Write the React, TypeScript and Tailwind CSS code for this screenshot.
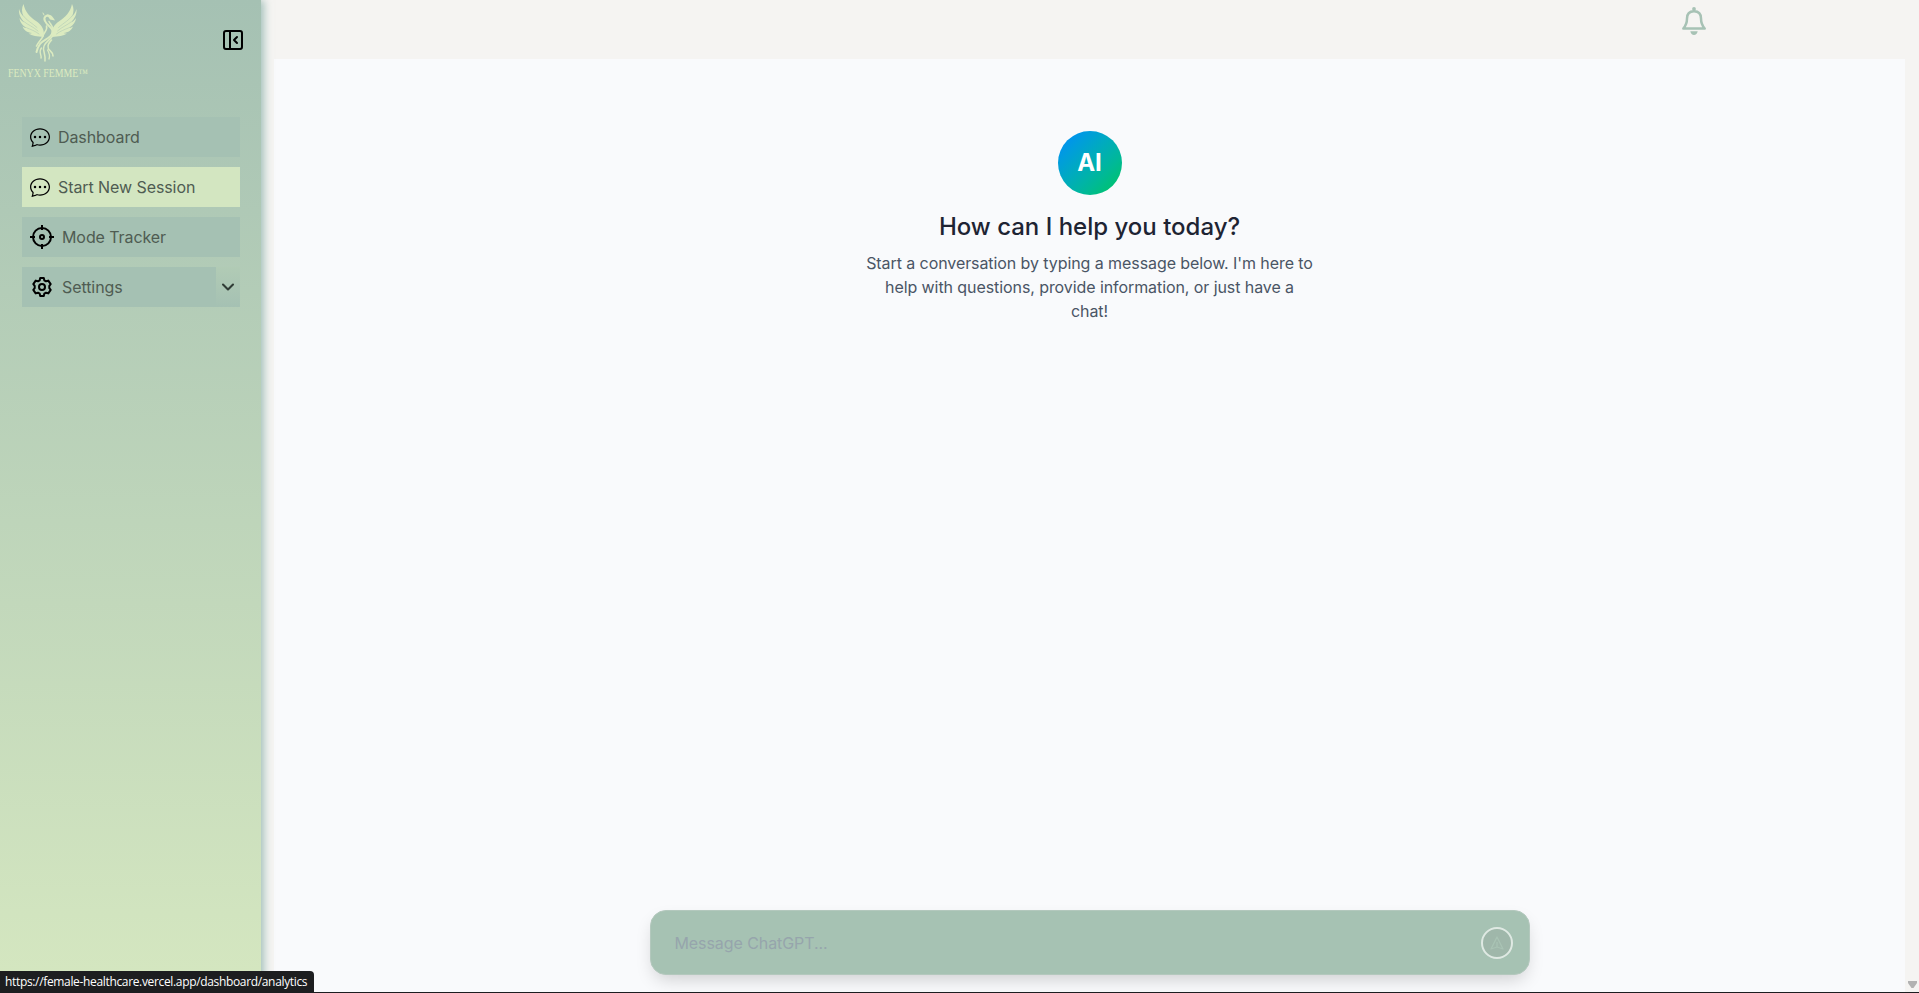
import type { ReactNode } from 'react';
import { PanelLeftClose, ChevronDown } from 'lucide-react';
import { BsChatDots } from 'react-icons/bs';

function PhoenixWing() {
  return (
    <g>
      <path d="M23.500 4 C25 12 30 17 36 21 C42 25 45 30 43.500 37 C37 36.500 32 36 28.500 33.500 C30 33.500 31 33.500 32 33 C27 32.500 24 30 22.500 26.500 C24 27.500 25.500 28 27 28 C22 25.500 20 22 19.500 18 C21 20 22.500 21.500 24.500 22.500 C20.500 18 18.500 14 19 9 C20 12 21.500 14.500 23.500 16.500 C21.500 12 21.500 8 23.500 4Z" />
      <g fill="none" stroke="#a9c4b5" strokeWidth="0.5" strokeLinecap="round">
        <path d="M23.500 16 C26 20 32 23 37 27.500" />
        <path d="M24.500 22 C28 25 33 26.500 38 31" />
        <path d="M27 28 C31 29.500 35 31 39 34" />
      </g>
    </g>
  );
}

function Logo() {
  return (
    <svg viewBox="0 0 96 84" className="h-[84px] w-[96px] shrink-0" fill="#dcebc0">
      <PhoenixWing />
      <g transform="translate(95.500 0) scale(-1 1)">
        <PhoenixWing />
      </g>
      <g fill="none" stroke="#dcebc0" strokeLinecap="round">
        <path d="M50.500 17.500 C47 13.500 43 17 45 21 C47 26 53 27 52.500 32 C52 38 43 40 40 44 C38 47 37 49 36.500 52" strokeWidth="2" />
        <path d="M49 21.500 C51 25 54.500 28 53.500 34 C52 39 46 41 44 46 C42 50 46 54 45 61" strokeWidth="1.500" />
        <path d="M46.500 26 C48 30 44 32 43 36 C42 39 38 42 36.500 46" strokeWidth="1.600" />
        <path d="M51.500 40 C49 43 47 45 48.500 49 C50 51 53 52 53 56" strokeWidth="1.600" />
        <path d="M41.500 48 C38 52 42 55 41 58" strokeWidth="1.400" />
        <path d="M47.500 50 C50 54 50 56 49 59" strokeWidth="1.300" />
        <path d="M44 15 L43 13" strokeWidth="1" />
      </g>
      <path d="M47 14.500 C51 14 53 17 55 20.500 L50 19.500Z" />
      <text x="8" y="77" fontSize="11.500" fontFamily="'Liberation Serif', serif" textLength="80" lengthAdjust="spacingAndGlyphs">
        FENYX FEMME™
      </text>
    </svg>
  );
}

function TargetIcon() {
  return (
    <svg viewBox="0 0 24 24" className="size-6" fill="none" stroke="currentColor" strokeWidth="2">
      <circle cx="12" cy="12" r="9" />
      <circle cx="12" cy="12" r="2" />
      <path d="M12 0v5M12 19v5M0 12h5M19 12h5" />
    </svg>
  );
}

function CogIcon() {
  return (
    <svg viewBox="0 0 24 24" className="size-6" fill="none" stroke="currentColor" strokeWidth="2" strokeLinejoin="round">
      <path d="M10.200 3h3.600l.5 2.300 1.700 1 2.300-.7 2.400 3.500-1.400 1.700v2.400l1.400 1.700-2.400 3.500-2.300-.7-1.700 1-.5 2.300h-3.600l-.5-2.300-1.700-1-2.300.7-2.400-3.500 1.400-1.700v-2.400L3.300 9.100l2.400-3.500 2.300.7 1.700-1Z" />
      <circle cx="12" cy="12" r="3" />
    </svg>
  );
}

function BellIcon() {
  return (
    <svg viewBox="0 0 28 28" className="size-7 text-[#a7c2b5]" fill="currentColor">
      <circle cx="14" cy="2" r="1.900" />
      <path
        d="M3.300 21.500 C6 18.500 7 16 7 11.500 C7 7 9.500 4.200 14 4.200 C18.500 4.200 21 7 21 11.500 C21 16 22 18.500 24.700 21.500Z"
        fill="none"
        stroke="currentColor"
        strokeWidth="2.500"
        strokeLinejoin="round"
      />
      <path d="M10.300 24.300h7.400c-.4 2.400-1.900 3.600-3.700 3.600s-3.300-1.200-3.700-3.600Z" />
    </svg>
  );
}

function NavItem({ icon, label, active, wide, children }: { icon: ReactNode; label: string; active?: boolean; wide?: boolean; children?: ReactNode }) {
  return (
    <a className={`flex h-10 items-center pl-2 text-base text-[#4f5c52] ${active ? 'bg-[#d3e6c1]' : 'bg-[#a5c1b3]'}`}>
      <span className={`flex shrink-0 items-center text-black ${wide ? 'w-8' : 'w-7'}`}>{icon}</span>
      <span className="flex-1 tracking-[-0.005em]">{label}</span>
      {children}
    </a>
  );
}

export default function App() {
  return (
    <div className="relative flex h-[993px] w-full overflow-hidden border-b border-[#1c1d20] bg-[#f5f4f2] font-['Inter',sans-serif]">
      <aside className="z-10 flex w-[261px] shrink-0 flex-col bg-linear-to-b from-[#a5c1b3] to-[#d5e7c0] shadow-[3px_0_8px_rgba(110,160,150,0.6)]">
        <div className="flex h-[84px] items-start justify-between pr-4">
          <Logo />
          <PanelLeftClose className="mt-7 size-6 text-black" />
        </div>
        <nav className="mt-[33px] flex flex-col gap-2.5 pr-[21px] pl-[22px]">
          <NavItem icon={<BsChatDots className="size-5" />} label="Dashboard" />
          <NavItem icon={<BsChatDots className="size-5" />} label="Start New Session" active />
          <NavItem icon={<TargetIcon />} label="Mode Tracker" wide />
          <NavItem icon={<CogIcon />} label="Settings" wide>
            <span className="flex h-10 w-6 items-center justify-center bg-linear-to-b from-[#b1cbb5] to-[#a5c1b3]">
              <ChevronDown className="size-5 text-[#303c36]" strokeWidth={2.5} />
            </span>
          </NavItem>
        </nav>
      </aside>

      <div className="flex min-w-0 flex-1 flex-col pr-3.5 pl-[13px]">
        <header className="flex h-[59px] shrink-0 justify-end pt-[7px] pr-[197px]">
          <BellIcon />
        </header>
        <main className="flex flex-1 flex-col items-center bg-[#f9fafc] pb-[17px]">
          <div className="mt-[72px] flex size-16 items-center justify-center rounded-full bg-linear-to-br from-[#0088ff] to-[#00c755] text-2xl font-bold text-white">
            AI
          </div>
          <h1 className="mt-4 text-2xl leading-8 font-medium text-[#1e2433]">How can I help you today?</h1>
          <p className="mt-2 w-[448px] text-center text-base leading-6 tracking-[-0.005em] text-[#4a5565]">
            Start a conversation by typing a message below. I'm here to help with questions, provide information, or just have a chat!
          </p>
          <div className="mt-auto flex h-[65px] w-[880px] items-center justify-between rounded-2xl border border-[#b3c8bd] bg-[#a6c2b3] pr-4 pl-6 shadow-[0_8px_18px_-4px_rgba(0,0,0,0.18)]">
            <span className="text-base tracking-[-0.005em] text-[#96a5ac]">Message ChatGPT...</span>
            <button className="flex size-8 items-center justify-center rounded-full border-2 border-[#dfe9e3] bg-[#9fb7aa]">
              <svg viewBox="0 0 16 16" className="size-4" fill="none" stroke="#a9c3b4" strokeWidth="1.300" strokeLinejoin="round">
                <path d="M8 2 14 14 8 12 2 14ZM8 7v5" />
              </svg>
            </button>
          </div>
        </main>
      </div>

      <svg viewBox="0 0 9 7" className="absolute right-[2px] bottom-[4px] h-[7px] w-[9px]" fill="#b2b2b2">
        <path d="M0 0h9v2L5.500 7h-2L0 2Z" />
      </svg>
      <div className="absolute bottom-[-1px] left-0 z-20 flex h-[22px] w-[314px] items-center rounded-tr bg-[#1d1e20] pl-[5px] font-['Open_Sans',sans-serif] text-xs tracking-[-0.34px] whitespace-nowrap text-white">
        https://female-healthcare.vercel.app/dashboard/analytics
      </div>
    </div>
  );
}
